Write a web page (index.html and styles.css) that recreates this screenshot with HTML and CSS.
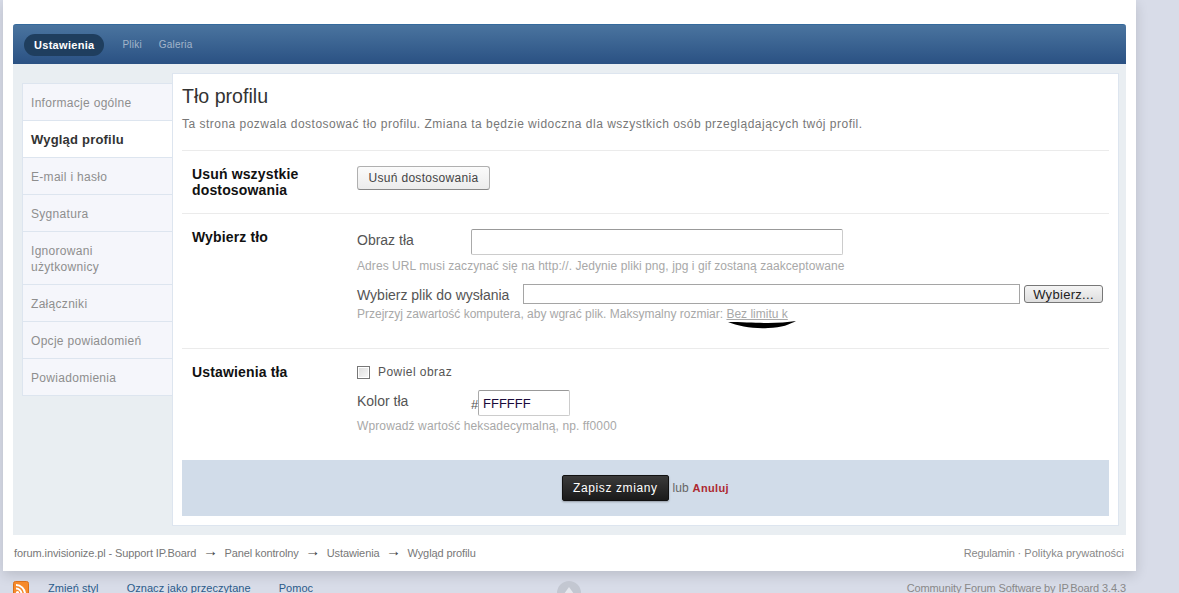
FILE: index.html
```html
<!DOCTYPE html>
<html lang="pl">
<head>
    <meta charset="UTF-8">
    <title>Tło profilu</title>
    <link rel="stylesheet" href="styles.css">
</head>
<body>
    <div class="wrapper">
        <div class="tabs">
            <a class="tab active" href="#">Ustawienia</a>
            <a class="tab" href="#">Pliki</a>
            <a class="tab" href="#">Galeria</a>
        </div>
        <div class="main">
            <ul class="side">
                <li>Informacje ogólne</li>
                <li class="current">Wygląd profilu</li>
                <li>E-mail i hasło</li>
                <li>Sygnatura</li>
                <li>Ignorowani użytkownicy</li>
                <li>Załączniki</li>
                <li>Opcje powiadomień</li>
                <li>Powiadomienia</li>
            </ul>
            <div class="content">
                <h1>Tło profilu</h1>
                <p class="intro">Ta strona pozwala dostosować tło profilu. Zmiana ta będzie widoczna dla wszystkich osób przeglądających twój profil.</p>

                <div class="row row-reset">
                    <div class="row-title">Usuń wszystkie dostosowania</div>
                    <div class="row-body">
                        <button class="btn">Usuń dostosowania</button>
                    </div>
                </div>

                <div class="row row-choose">
                    <div class="row-title">Wybierz tło</div>
                    <div class="row-body">
                        <div class="field">
                            <label class="label-url">Obraz tła</label>
                            <input class="input-url" type="text">
                        </div>
                        <p class="hint hint-url">Adres URL musi zaczynać się na http://. Jedynie pliki png, jpg i gif zostaną zaakceptowane</p>
                        <div class="field field-file">
                            <label class="label-file">Wybierz plik do wysłania</label>
                            <input class="input-file" type="text">
                            <button class="btn-file">Wybierz...</button>
                        </div>
                        <p class="hint hint-file">Przejrzyj zawartość komputera, aby wgrać plik. Maksymalny rozmiar: <span class="limit">Bez limitu k<svg class="scribble" width="70" height="8" viewBox="0 0 70 8"><path d="M0 1 C14 1 30 2 40 2 C50 2 60 1 68 0 C62 3 54 7 40 7 C26 8 10 5 0 1 Z" fill="#000"/></svg></span></p>
                    </div>
                </div>

                <div class="row row-settings">
                    <div class="row-title">Ustawienia tła</div>
                    <div class="row-body">
                        <label class="check"><span class="box"></span>Powiel obraz</label>
                        <div class="field field-color">
                            <label class="label-url">Kolor tła</label>
                            <span class="hash">#</span>
                            <input class="input-color" type="text" value="FFFFFF">
                        </div>
                        <p class="hint hint-color">Wprowadź wartość heksadecymalną, np. ff0000</p>
                    </div>
                </div>

                <div class="submit">
                    <button class="btn-save">Zapisz zmiany</button>
                    <span class="or">lub</span>
                    <a class="cancel" href="#">Anuluj</a>
                </div>
            </div>
        </div>
        <div class="crumbs">
            <div class="crumb-list">
                <a href="#">forum.invisionize.pl - Support IP.Board</a>
                <span class="arrow">&rarr;</span>
                <a href="#">Panel kontrolny</a>
                <span class="arrow">&rarr;</span>
                <a href="#">Ustawienia</a>
                <span class="arrow">&rarr;</span>
                <a href="#">Wygląd profilu</a>
            </div>
            <div class="policy">
                <a class="rules" href="#">Regulamin</a> · <a href="#">Polityka prywatności</a>
            </div>
        </div>
    </div>
    <div class="bottom">
        <svg class="rss" width="16" height="16" viewBox="0 0 16 16">
            <rect x="0.5" y="0.5" width="15" height="15" rx="2" fill="#f68a2b" stroke="#d9701a"/>
            <circle cx="4.5" cy="11.5" r="1.6" fill="#fff"/>
            <path d="M3 7.5a5.5 5.5 0 0 1 5.5 5.5M3 4a9 9 0 0 1 9 9" fill="none" stroke="#fff" stroke-width="2"/>
        </svg>
        <a href="#">Zmień styl</a>
        <a href="#">Oznacz jako przeczytane</a>
        <a href="#">Pomoc</a>
        <span class="top-btn"></span>
        <span class="credit">Community Forum Software by IP.Board 3.4.3</span>
    </div>
</body>
</html>
```

FILE: styles.css
```css
html, body {
    height: 593px;
    overflow: hidden;
}
body {
    font-family: 'Liberation Sans', Arial, sans-serif;
    font-size: 13px;
    background-color: #d8dce8;
    color: #5a5a5a;
    margin: 0;
}
a {
    color: inherit;
    text-decoration: none;
}
ul {
    list-style: none;
    margin: 0;
    padding: 0;
}
.wrapper {
    width: 1133px;
    height: 571px;
    box-sizing: border-box;
    margin-left: 3px;
    padding: 24px 10px 0;
    background: #ffffff;
    box-shadow: 0 4px 12px rgba(0, 0, 0, 0.14);
}
.tabs {
    height: 40px;
    display: flex;
    align-items: center;
    padding: 0 11px;
    gap: 17px;
    border-radius: 3px 3px 0 0;
    border-top: 1px solid #356a9c;
    box-sizing: border-box;
    background: linear-gradient(to bottom, #4a749f, #2a5183);
}
.tab {
    font-size: 10px;
    letter-spacing: 0.2px;
    color: #a3b5ca;
}
.tab.active {
    height: 22px;
    line-height: 22px;
    padding: 0 10px;
    margin-right: 1px;
    border-radius: 11px;
    background: #1f3e5e;
    color: #ffffff;
    font-weight: bold;
    font-size: 11px;
    letter-spacing: 0.3px;
}
.main {
    height: 471px;
    box-sizing: border-box;
    display: flex;
    align-items: flex-start;
    padding: 9px 7px 9px 9px;
    background: #e9eef2;
}
.side {
    width: 150px;
    margin-top: 10px;
    flex-shrink: 0;
}
.side li {
    padding: 11px 24px 9px 8px;
    line-height: 16px;
    font-size: 12px;
    letter-spacing: 0.3px;
    color: #8e8e8e;
    background: #f5f6fb;
    border: 1px solid #dde5ef;
    border-width: 1px 0 0 1px;
}
.side li:last-child {
    border-bottom: 1px solid #dde5ef;
}
.side .current {
    background: #ffffff;
    color: #333333;
    font-weight: bold;
    font-size: 13px;
    letter-spacing: 0.2px;
}
.content {
    flex: 1;
    height: 453px;
    box-sizing: border-box;
    padding: 10px 9px 9px 9px;
    background: #ffffff;
    border: 1px solid #dde5ef;
}
h1 {
    font-size: 19.6px;
    font-weight: normal;
    color: #333333;
    margin: 1px 0 0;
    line-height: 22px;
}
.intro {
    font-size: 12px;
    color: #777777;
    margin: 10px 0 0;
    line-height: 14px;
    letter-spacing: 0.485px;
    height: 33px;
    border-bottom: 1px solid #ebebeb;
}
.row {
    display: flex;
    border-bottom: 1px solid #ebebeb;
    box-sizing: border-box;
}
.row-reset { height: 63px; padding-top: 15px; }
.row-choose { height: 135px; padding-top: 15px; }
.row-settings { height: 111px; padding-top: 15px; border-bottom: 0; }
.row-title {
    width: 175px;
    padding-left: 10px;
    padding-right: 30px;
    box-sizing: border-box;
    flex-shrink: 0;
    font-size: 14px;
    letter-spacing: 0.15px;
    font-weight: bold;
    line-height: 16px;
    color: #111111;
}
.row-body {
    flex: 1;
    min-width: 0;
}
.btn {
    height: 24px;
    width: 133px;
    padding: 0;
    font: 12px 'Liberation Sans', Arial, sans-serif;
    letter-spacing: 0.3px;
    color: #444444;
    background: linear-gradient(to bottom, #fbfbfb, #ececec);
    border: 1px solid #b0b0b0;
    border-bottom-color: #888888;
    border-radius: 3px;
}
.field {
    display: flex;
    align-items: center;
    height: 26px;
}
label {
    font-size: 14px;
    color: #555555;
}
.label-url {
    width: 114px;
    margin-top: -4px;
    flex-shrink: 0;
}
.label-file {
    width: 166px;
    margin-top: 2px;
    flex-shrink: 0;
}
input {
    box-sizing: border-box;
    margin: 0;
    background: #ffffff;
    border: 1px solid;
    border-color: #999999 #cccccc #cccccc #aaaaaa;
    border-radius: 2px;
    font-family: 'Liberation Sans', Arial, sans-serif;
}
.input-url {
    width: 372px;
    height: 26px;
}
.hint {
    margin: 0;
    font-size: 12px;
    line-height: 14px;
    letter-spacing: 0.07px;
    color: #a8a8a8;
}
.hint-url {
    margin-top: 4px;
}
.field-file {
    height: 20px;
    margin-top: 11px;
}
.input-file {
    width: 497px;
    height: 20px;
    border-color: #a5a5a5;
    border-radius: 0;
}
.btn-file {
    width: 79px;
    height: 18px;
    margin-left: 4px;
    padding: 0;
    font: 13px 'Liberation Sans', Arial, sans-serif;
    letter-spacing: 0.3px;
    color: #222222;
    background: linear-gradient(to bottom, #f4f4f4, #dedede);
    border: 1px solid #777777;
    border-radius: 3px;
}
.hint-file {
    margin-top: 3px;
    letter-spacing: 0;
}
.limit {
    position: relative;
    text-decoration: underline;
}
.scribble {
    position: absolute;
    left: 2px;
    top: 14px;
}
.check {
    display: flex;
    align-items: center;
    height: 18px;
    margin-top: -1px;
    font-size: 12px;
    letter-spacing: 0.45px;
}
.box {
    width: 11px;
    height: 11px;
    margin-right: 8px;
    border: 1px solid #777777;
    background: linear-gradient(135deg, #dcdcdc, #f8f8f8);
    box-shadow: inset 0 0 0 1px #ffffff;
}
.field-color {
    height: 26px;
    margin-top: 9px;
}
.hash {
    margin-top: 3px;
    width: 7px;
    color: #555555;
}
.input-color {
    width: 92px;
    height: 26px;
    padding: 0 4px;
    font-size: 13px;
    color: #1a0a3a;
}
.hint-color {
    margin-top: 3px;
    letter-spacing: 0.12px;
}
.submit {
    height: 56px;
    display: flex;
    align-items: center;
    justify-content: center;
    gap: 4px;
    background: #d1dce9;
}
.btn-save {
    height: 26px;
    padding: 0 10px;
    font: 12px 'Liberation Sans', Arial, sans-serif;
    letter-spacing: 0.6px;
    color: #ffffff;
    background: linear-gradient(to bottom, #3a3a3a, #1a1a1a);
    border: 1px solid #111111;
    border-radius: 2px;
    box-shadow: 0 1px 2px rgba(0, 0, 0, 0.3);
}
.or {
    font-size: 12px;
    color: #666666;
}
.cancel {
    font-size: 11px;
    letter-spacing: 0.35px;
    font-weight: bold;
    color: #ad2930;
}
.crumbs {
    display: flex;
    justify-content: space-between;
    padding: 12px 2px 0 1px;
    font-size: 11px;
    color: #777777;
    line-height: 12px;
}
.crumb-list {
    display: flex;
    letter-spacing: -0.1px;
}
.arrow {
    width: 28px;
    margin-top: -2px;
    text-align: center;
    color: #444444;
    font-size: 15px;
}
.policy {
    color: #888888;
}
.rules {
    letter-spacing: -0.2px;
}
.bottom {
    position: relative;
    display: flex;
    align-items: flex-start;
    height: 12px;
    padding: 10px 0 0 13px;
    font-size: 11px;
    letter-spacing: 0.05px;
    line-height: 12px;
    color: #2a5a8a;
}
.rss {
    flex-shrink: 0;
    margin-right: 19px;
}
.bottom a {
    margin-right: 28px;
    margin-top: 1px;
}
.top-btn {
    position: absolute;
    left: 557px;
    top: 10px;
    width: 24px;
    height: 24px;
    border-radius: 50%;
    background: #c3c7d1;
}
.top-btn::after {
    content: "";
    position: absolute;
    left: 7px;
    top: 6px;
    border: 5px solid transparent;
    border-top: 0;
    border-bottom: 7px solid #e6e8ee;
}
.credit {
    margin-left: auto;
    margin-right: 53px;
    margin-top: 1px;
    letter-spacing: -0.1px;
    color: #888888;
}
```
